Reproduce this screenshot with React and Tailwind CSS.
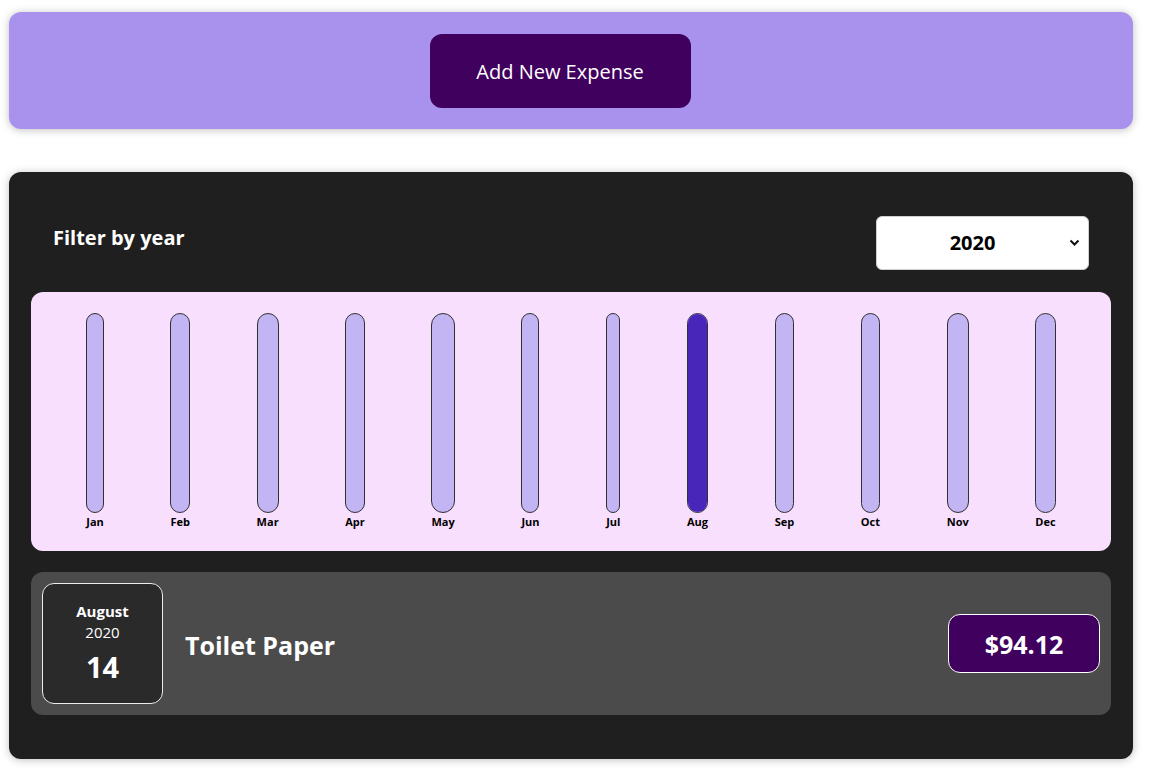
import React, { useState } from 'react';

const months = ['Jan', 'Feb', 'Mar', 'Apr', 'May', 'Jun', 'Jul', 'Aug', 'Sep', 'Oct', 'Nov', 'Dec'];

const expenses = [
  { id: 'e1', title: 'Toilet Paper', amount: 94.12, date: new Date(2020, 7, 14) },
];

const ChartBar = ({ label, fill }) => (
  <div className="flex h-full flex-col items-center">
    <div className="relative w-full flex-1 overflow-hidden rounded-full border border-[#313131] bg-[#c3b4f3]">
      <div
        className="absolute bottom-0 left-0 w-full bg-[#4826b9]"
        style={{ height: `${fill}%` }}
      ></div>
    </div>
    <div className="pt-[1px] text-[11px] font-bold leading-[15px] text-black">{label}</div>
  </div>
);

const ExpenseDate = ({ date }) => (
  <div className="flex h-[121px] w-[121px] shrink-0 flex-col items-center justify-center rounded-[12px] border border-[#ececec] bg-[#2a2a2a] text-white">
    <div className="text-[15px] font-bold leading-[21px]">
      {date.toLocaleString('en-US', { month: 'long' })}
    </div>
    <div className="text-[15px] leading-[21px]">{date.getFullYear()}</div>
    <div className="mt-[4px] text-[29px] font-bold leading-[40px]">{date.getDate()}</div>
  </div>
);

const App = () => {
  const [year, setYear] = useState('2020');

  const filtered = expenses.filter((e) => e.date.getFullYear().toString() === year);
  const values = months.map((_, i) =>
    filtered.filter((e) => e.date.getMonth() === i).reduce((s, e) => s + e.amount, 0)
  );
  const max = Math.max(...values);

  return (
    <div className="min-h-screen bg-white pt-[12px] pb-[12px] font-['Open_Sans','Noto_Sans',sans-serif]">
      {/* New expense */}
      <div className="ml-[9px] flex w-[1124px] justify-center rounded-[12px] bg-[#a892ee] pt-[22px] pb-[21px] pr-[22px] shadow-[0_1px_8px_rgba(0,0,0,0.25)]">
        <button className="h-[74px] w-[261px] rounded-[12px] bg-[#40005d] pt-[2px] text-[20px] text-white">
          Add New Expense
        </button>
      </div>

      {/* Expenses */}
      <div className="ml-[9px] mt-[43px] w-[1124px] rounded-[12px] bg-[#1f1f1f] px-[22px] pt-[44px] pb-[44px] shadow-[0_1px_8px_rgba(0,0,0,0.25)]">
        <div className="flex items-center justify-between px-[22px]">
          <label className="mb-[10px] text-[20px] font-bold text-white">Filter by year</label>
          <div className="relative">
            <select
              value={year}
              onChange={(e) => setYear(e.target.value)}
              className="h-[54px] w-[213px] appearance-none rounded-[6px] border border-[#cfcfcf] bg-white pr-[20px] text-center text-[20px] font-bold text-black"
            >
              <option value="2022">2022</option>
              <option value="2021">2021</option>
              <option value="2020">2020</option>
              <option value="2019">2019</option>
            </select>
            <svg
              className="pointer-events-none absolute right-[9px] top-[23px]"
              width="11"
              height="8"
              viewBox="0 0 11 8"
              fill="none"
            >
              <path d="M1.5 1.5L5.5 5.5L9.5 1.5" stroke="#111" strokeWidth="2" />
            </svg>
          </div>
        </div>

        {/* Chart */}
        <div className="mt-[22px] flex h-[259px] justify-around rounded-[12px] bg-[#f8dffd] px-[22px] pt-[21px] pb-[22px]">
          {months.map((m, i) => (
            <ChartBar key={m} label={m} fill={max > 0 ? Math.round((values[i] / max) * 100) : 0} />
          ))}
        </div>

        {/* List */}
        <ul className="mt-[21px]">
          {filtered.map((e) => (
            <li
              key={e.id}
              className="flex items-center rounded-[12px] bg-[#4b4b4b] p-[11px]"
            >
              <ExpenseDate date={e.date} />
              <div className="flex flex-1 items-center justify-between pl-[22px]">
                <h2 className="pt-[4px] text-[25px] font-bold text-white">{e.title}</h2>
                <div className="flex h-[59px] w-[152px] items-center justify-center rounded-[12px] border border-white bg-[#40005d] pt-[3px] text-[25px] font-bold text-white">
                  ${e.amount}
                </div>
              </div>
            </li>
          ))}
        </ul>
      </div>
    </div>
  );
};

export default App;
